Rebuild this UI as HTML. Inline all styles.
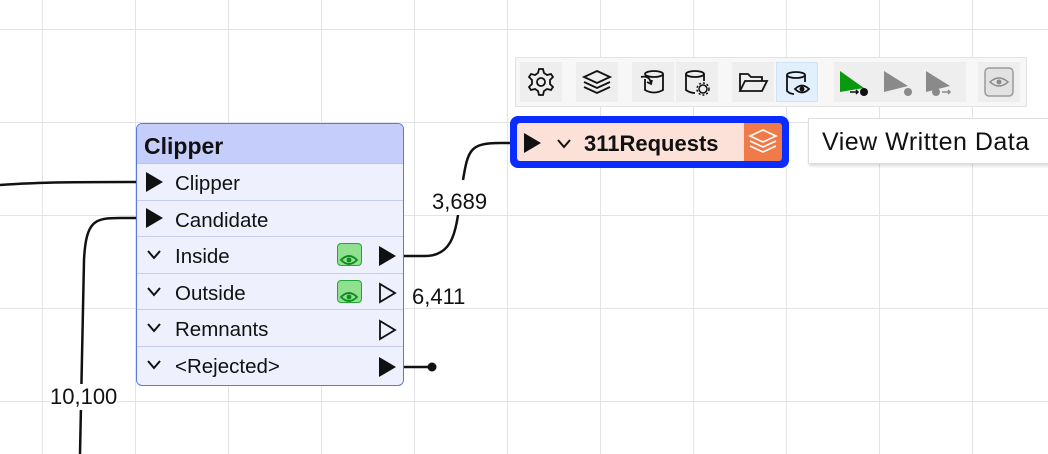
<!DOCTYPE html>
<html><head><style>
body{margin:0;width:1048px;height:454px;overflow:hidden;background:#fff;font-family:"Liberation Sans",sans-serif;position:relative}
.grid{position:absolute;inset:0;background-image:linear-gradient(to right,#e3e3e3 1px,transparent 1px),linear-gradient(to bottom,#e3e3e3 1px,transparent 1px);background-size:93px 93px;background-position:42px 29px}
.abs{position:absolute}
.node{left:136px;top:123px;width:266px;height:261px;border:1.5px solid #5a78e0;border-radius:6px;background:#eef0fd;overflow:hidden}
.hdr{height:39px;background:#c5cefa;border-bottom:1.5px solid #b8c3f5;font-weight:bold;font-size:23px;line-height:44px;padding-left:7px;color:#111}
.row{height:35.5px;border-bottom:1.5px solid #c6cdf5;font-size:20.5px;line-height:39px;padding-left:38px;position:relative;color:#111}
.row:last-child{border-bottom:none}
.chev{position:absolute;left:10px;top:13px}
.eye{position:absolute;left:200px;top:6px;width:25px;height:23px;border:1.5px solid #22a832;border-radius:4px;box-sizing:border-box;background:#8fe08f}
.tb{left:515px;top:57px;width:510px;height:48px;background:#f7f7f7;border:1px solid #e2e2e2}
.btn{position:absolute;top:4px;width:42px;height:40px;background:#eeeeee}
.lbl{font-size:22px;color:#111;background:#fff;position:absolute}
</style></head><body>
<div class="grid"></div>
<svg class="abs" style="left:0;top:0" width="1048" height="454">
<g fill="none" stroke="#111" stroke-width="2.5">
<path d="M0 185 C40 182 80 182 150 182"/>
<path d="M80 454 L84 260 C86 220 95 218 120 218 L150 218"/>
<path d="M390 256 L425 256 C450 256 455 235 458 215"/>
<path d="M463 180 C468 150 470 143 500 143 L525 143"/>
<path d="M390 367 L432 367"/>
</g>
<circle cx="432" cy="367" r="4.5" fill="#111"/>
</svg>
<div class="abs node">
<div class="hdr">Clipper</div>
<div class="row">Clipper</div>
<div class="row">Candidate</div>
<div class="row"><svg class="chev" width="14" height="10"><path d="M1 1 L7 8 L13 1" fill="none" stroke="#111" stroke-width="2"/></svg>Inside<div class="eye"><svg width="22" height="20" viewBox="0 0 22 20"><path d="M3 10 Q11 2 19 10 Q11 18 3 10Z" fill="none" stroke="#128a22" stroke-width="1.8"/><circle cx="11" cy="10" r="2.4" fill="#128a22"/></svg></div></div>
<div class="row"><svg class="chev" width="14" height="10"><path d="M1 1 L7 8 L13 1" fill="none" stroke="#111" stroke-width="2"/></svg>Outside<div class="eye"><svg width="22" height="20" viewBox="0 0 22 20"><path d="M3 10 Q11 2 19 10 Q11 18 3 10Z" fill="none" stroke="#128a22" stroke-width="1.8"/><circle cx="11" cy="10" r="2.4" fill="#128a22"/></svg></div></div>
<div class="row"><svg class="chev" width="14" height="10"><path d="M1 1 L7 8 L13 1" fill="none" stroke="#111" stroke-width="2"/></svg>Remnants</div>
<div class="row"><svg class="chev" width="14" height="10"><path d="M1 1 L7 8 L13 1" fill="none" stroke="#111" stroke-width="2"/></svg>&lt;Rejected&gt;</div>
</div>
<svg class="abs" style="left:0;top:0" width="1048" height="454">
<polygon points="146,172 163,182 146,192" fill="#111"/>
<polygon points="146,208 163,218 146,228" fill="#111"/>
<polygon points="379,246 396,256 379,266" fill="#111"/>
<polygon points="380,284 395,293 380,302" fill="none" stroke="#111" stroke-width="1.8"/>
<polygon points="380,321 395,330 380,339" fill="none" stroke="#111" stroke-width="1.8"/>
<polygon points="379,357 396,367 379,377" fill="#111"/>
</svg>
<div class="lbl" style="left:432px;top:189px">3,689</div>
<div class="lbl" style="left:412px;top:284px;background:none">6,411</div>
<div class="lbl" style="left:50px;top:384px">10,100</div>

<div class="abs tb">
<div class="btn" style="left:4px"><svg width="42" height="40" viewBox="0 0 42 40"><circle cx="21" cy="20" r="4" fill="none" stroke="#111" stroke-width="1.8"/><path d="M19 7 h4 l1 4 3 2 4-1 2 3-3 3 0 4 3 3-2 3-4-1-3 2-1 4 h-4 l-1-4-3-2-4 1-2-3 3-3 0-4-3-3 2-3 4 1 3-2z" fill="none" stroke="#111" stroke-width="1.8"/></svg></div>
<div class="btn" style="left:60px"><svg width="42" height="40" viewBox="0 0 42 40"><path d="M21 9 L34 15 21 21 8 15Z M8 20 L21 26 34 20 M8 25 L21 31 34 25" fill="none" stroke="#111" stroke-width="1.8"/></svg></div>
<div class="btn" style="left:116px"><svg width="42" height="40" viewBox="0 0 42 40"><ellipse cx="22" cy="12" rx="9" ry="3" fill="none" stroke="#111" stroke-width="1.8"/><path d="M13 17 V28 Q22 33 31 28 V12 M9 15 Q18 13 19 22 M15 20 l4 2 1-4" fill="none" stroke="#111" stroke-width="1.8"/></svg></div>
<div class="btn" style="left:160px"><svg width="42" height="40" viewBox="0 0 42 40"><ellipse cx="19" cy="12" rx="9" ry="3" fill="none" stroke="#111" stroke-width="1.8"/><path d="M10 12 V28 Q14 31 19 31 M28 12 V19" fill="none" stroke="#111" stroke-width="1.8"/><circle cx="27" cy="27" r="4" fill="none" stroke="#111" stroke-width="1.5"/><circle cx="27" cy="27" r="6" fill="none" stroke="#111" stroke-width="1.5" stroke-dasharray="2 2"/></svg></div>
<div class="btn" style="left:216px"><svg width="42" height="40" viewBox="0 0 42 40"><path d="M8 29 V12 h8 l3 3 h11 v4 M8 29 L13 19 H35 L30 29Z" fill="none" stroke="#111" stroke-width="1.8"/></svg></div>
<div class="btn" style="left:260px;background:#e2effc;border:1px solid #cfe2f6;box-sizing:border-box"><svg width="42" height="40" viewBox="0 0 42 40"><ellipse cx="19" cy="12" rx="9" ry="3" fill="none" stroke="#111" stroke-width="1.8"/><path d="M10 12 V28 Q13 31 17 31 M28 12 V19" fill="none" stroke="#111" stroke-width="1.8"/><path d="M18 26 Q25 19 32 26 Q25 33 18 26Z" fill="none" stroke="#111" stroke-width="1.8"/><circle cx="25" cy="26" r="2.5" fill="#111"/></svg></div>
<div class="btn" style="left:318px;width:132px"><svg width="132" height="40" viewBox="0 0 132 40"><path d="M6 9 L6 30 L30 26 Z" fill="#0a9a10"/><path d="M16 30 h8 m-2-2 l2 2-2 2" stroke="#111" stroke-width="1.5" fill="none"/><circle cx="30" cy="30" r="4" fill="#111"/><path d="M50 9 L50 30 L74 24 Z" fill="#8a8a8a"/><circle cx="74" cy="30" r="4" fill="#8a8a8a"/><path d="M92 9 L92 30 L116 24 Z" fill="#8a8a8a"/><circle cx="102" cy="30" r="4" fill="#8a8a8a"/><path d="M108 30 h8 m-2-2 l2 2-2 2" stroke="#8a8a8a" stroke-width="1.5" fill="none"/></svg></div>
<div class="btn" style="left:462px"><svg width="42" height="40" viewBox="0 0 42 40"><rect x="7" y="6" width="28" height="28" rx="4" fill="#e2e2e2" stroke="#9a9a9a" stroke-width="1.5"/><path d="M12 20 Q21 12 30 20 Q21 28 12 20Z" fill="none" stroke="#8a8a8a" stroke-width="1.5"/><circle cx="21" cy="20" r="2.5" fill="#8a8a8a"/></svg></div>
</div>

<div class="abs" style="left:510px;top:116px;width:271px;height:44px;border:4px solid #0a2cff;border-radius:8px;background:#0a2cff">
<div class="abs" style="left:3px;top:3px;width:227px;height:38px;background:#fbe1d8;border-radius:3px 0 0 3px"></div>
<div class="abs" style="left:230px;top:3px;width:38px;height:38px;background:#f07a48;border-radius:0 3px 3px 0"><svg width="38" height="38" viewBox="0 0 38 38"><path d="M19 7 L32 13 19 19 6 13Z M6 18 L19 24 32 18 M6 23 L19 29 32 23" fill="none" stroke="#fff" stroke-width="1.6"/></svg></div>
<svg class="abs" style="left:9px;top:13px" width="22" height="20"><polygon points="1,0 18,10 1,20" fill="#111"/></svg>
<svg class="abs" style="left:43px;top:19px" width="14" height="10"><path d="M1 1 L7 8 L13 1" fill="none" stroke="#111" stroke-width="2"/></svg>
<div class="abs" style="left:70px;top:11px;font-size:22px;font-weight:bold;color:#111">311Requests</div>
</div>

<div class="abs" style="left:808px;top:118px;width:250px;height:44px;background:#fff;border:1px solid #ddd;box-shadow:1px 2px 3px rgba(0,0,0,.15)"><div style="font-size:25px;letter-spacing:0.5px;padding:9px 0 0 13px;color:#111;white-space:nowrap">View Written Data</div></div>
</body></html>
